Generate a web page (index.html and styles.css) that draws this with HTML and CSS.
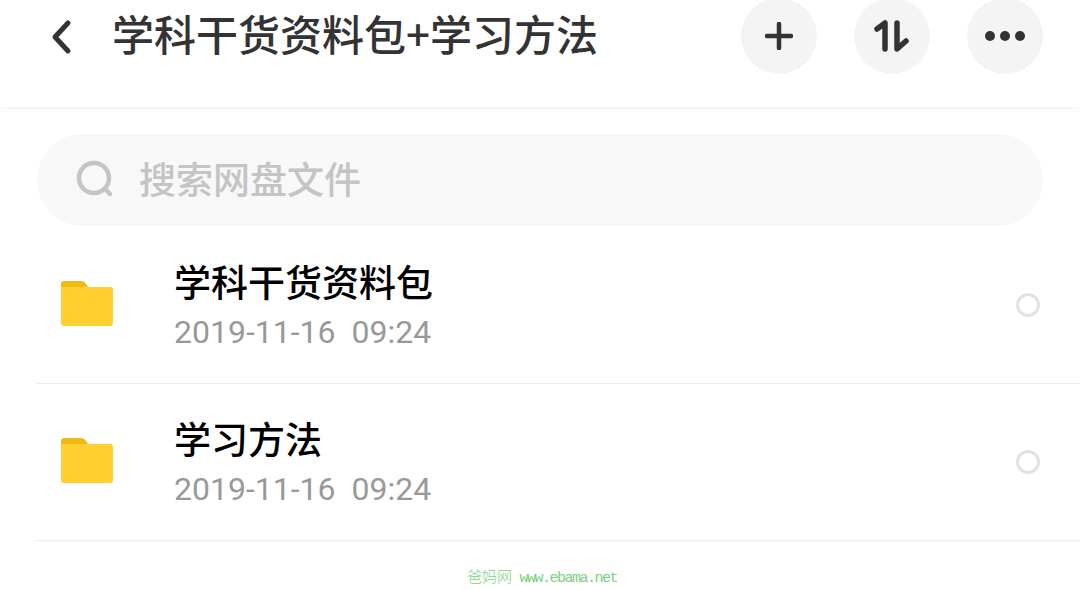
FILE: index.html
```html
<!DOCTYPE html>
<html lang="zh-CN">
<head>
    <meta charset="UTF-8">
    <meta name="viewport" content="width=device-width, initial-scale=1.0">
    <title>学科干货资料包+学习方法</title>
    <link rel="stylesheet" href="styles.css">
</head>
<body>
    <header class="top-bar">
        <svg class="back-icon" width="24" height="36" viewBox="0 0 24 36" fill="none" stroke="#333" stroke-width="5" stroke-linecap="round" stroke-linejoin="round">
            <polyline points="18 4 5 18 18 32"></polyline>
        </svg>
        <h1 class="page-title">学科干货资料包+学习方法</h1>
        <div class="top-actions">
            <button class="round-btn">
                <svg width="28" height="28" viewBox="0 0 28 28" fill="none" stroke="#333" stroke-width="4.5" stroke-linecap="round">
                    <line x1="14" y1="2" x2="14" y2="26"></line>
                    <line x1="2" y1="14" x2="26" y2="14"></line>
                </svg>
            </button>
            <button class="round-btn">
                <svg width="36" height="32" viewBox="0 0 36 32" fill="none" stroke="#333" stroke-width="5.5" stroke-linecap="round" stroke-linejoin="round">
                    <polyline points="3 9 11 3 11 29"></polyline>
                    <polyline points="23 3 23 29 32 21"></polyline>
                </svg>
            </button>
            <button class="round-btn">
                <svg width="42" height="12" viewBox="0 0 42 12" fill="#333">
                    <circle cx="6" cy="6" r="5"></circle>
                    <circle cx="21" cy="6" r="5"></circle>
                    <circle cx="36" cy="6" r="5"></circle>
                </svg>
            </button>
        </div>
    </header>

    <div class="search-wrap">
        <div class="search-box">
            <svg width="38" height="38" viewBox="0 0 38 38" fill="none" stroke="#c4c4c4" stroke-width="4.5" stroke-linecap="round">
                <circle cx="18" cy="18" r="15"></circle>
                <line x1="29" y1="29" x2="34" y2="34"></line>
            </svg>
            <span class="search-text">搜索网盘文件</span>
        </div>
    </div>

    <ul class="file-list">
        <li class="file-row">
            <svg class="folder" width="52" height="45" viewBox="0 0 52 45">
                <path d="M3 0h17c3 0 5 2 7 6H0V3C0 1 1 0 3 0z" fill="#eeb915"></path>
                <path d="M0 6h49c2 0 3 1 3 3v33c0 2-1 3-3 3H3c-2 0-3-1-3-3z" fill="#ffd02f"></path>
            </svg>
            <div class="file-info">
                <div class="file-name">学科干货资料包</div>
                <div class="file-date">2019-11-16&nbsp;&nbsp;09:24</div>
            </div>
            <span class="radio"></span>
        </li>
        <li class="file-row">
            <svg class="folder" width="52" height="45" viewBox="0 0 52 45">
                <path d="M3 0h17c3 0 5 2 7 6H0V3C0 1 1 0 3 0z" fill="#eeb915"></path>
                <path d="M0 6h49c2 0 3 1 3 3v33c0 2-1 3-3 3H3c-2 0-3-1-3-3z" fill="#ffd02f"></path>
            </svg>
            <div class="file-info">
                <div class="file-name">学习方法</div>
                <div class="file-date">2019-11-16&nbsp;&nbsp;09:24</div>
            </div>
            <span class="radio"></span>
        </li>
    </ul>

    <div class="watermark"><span class="watermark-cn">爸妈网</span> www.ebama.net</div>
</body>
</html>
```

FILE: styles.css
```css
* {
    margin: 0;
    padding: 0;
    box-sizing: border-box;
}

html, body {
    height: 590px;
    overflow: hidden;
}

body {
    background: #fff;
    font-family: "Noto Sans CJK SC", "Noto Sans", sans-serif;
}

.top-bar {
    display: flex;
    align-items: center;
    height: 107px;
    padding: 0 37px 34px 50px;
    box-shadow: 0 2px 5px rgba(0, 0, 0, 0.05);
}

.back-icon {
    flex-shrink: 0;
}

.page-title {
    margin: 0 0 7px 38px;
    font-size: 42px;
    line-height: 74px;
    font-weight: 500;
    color: #333;
    white-space: nowrap;
}

.top-actions {
    display: flex;
    gap: 37px;
    margin-left: auto;
}

.round-btn {
    display: flex;
    align-items: center;
    justify-content: center;
    width: 76px;
    height: 76px;
    margin-top: -2px;
    border: none;
    border-radius: 50%;
    background: #f4f4f4;
}

.search-wrap {
    padding: 27px 37px 1px;
}

.search-box {
    display: flex;
    align-items: center;
    height: 92px;
    padding-left: 39px;
    padding-bottom: 2px;
    border-radius: 46px;
    background: #f8f8f8;
}

.search-text {
    margin: 0 0 2px 25px;
    font-size: 37px;
    font-weight: 500;
    color: #c4c4c4;
}

.file-list {
    list-style: none;
    margin-left: 36px;
}

.file-row {
    display: flex;
    align-items: center;
    height: 157px;
    padding-left: 25px;
    border-bottom: 1px solid #ececec;
}

.folder {
    flex-shrink: 0;
    margin-bottom: 4px;
}

.file-info {
    margin-left: 61px;
    padding-top: 2px;
}

.file-name {
    font-size: 37px;
    line-height: 52px;
    font-weight: 500;
    color: #000;
}

.file-date {
    font-family: Roboto, sans-serif;
    font-size: 32px;
    line-height: 50px;
    color: #999;
}

.radio {
    width: 24px;
    height: 24px;
    margin-left: auto;
    margin-right: 40px;
    border: 3px solid #e2e2e2;
    border-radius: 50%;
}

.watermark {
    margin-top: 29px;
    padding-left: 467px;
    font-family: "Liberation Mono", "Noto Sans CJK SC", monospace;
    font-size: 15px;
    line-height: 18px;
    letter-spacing: -1.5px;
    color: #78d282;
    white-space: nowrap;
}

.watermark-cn {
    font-weight: 300;
    letter-spacing: 0;
}
```
